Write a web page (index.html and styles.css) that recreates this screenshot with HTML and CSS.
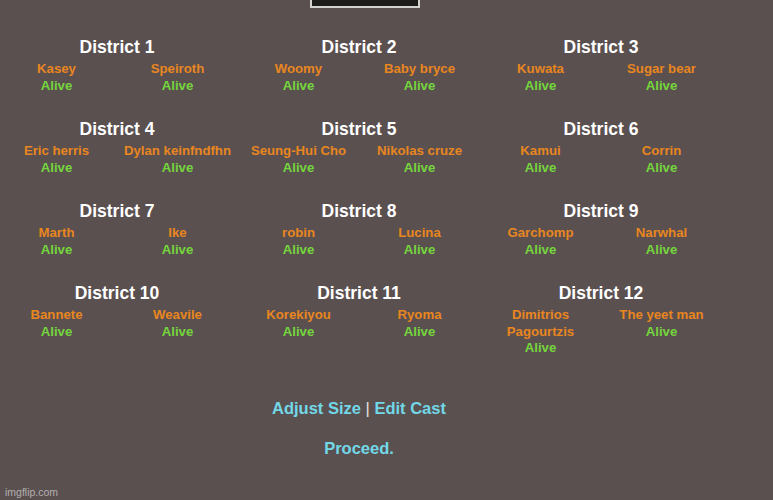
FILE: index.html
```html
<!DOCTYPE html>
<html lang="en">
  <head>
    <meta charset="UTF-8" />
    <meta name="viewport" content="width=device-width, initial-scale=1.0" />
    <title>The Reaping</title>
    <link rel="stylesheet" href="styles.css">
  </head>
  <body>
    <div class="page">
      <div class="banner"></div>

      <div class="districts">
        <div class="district">
          <h2>District 1</h2>
          <div class="tributes">
            <div class="tribute"><span class="name">Kasey</span><span class="status">Alive</span></div>
            <div class="tribute"><span class="name">Speiroth</span><span class="status">Alive</span></div>
          </div>
        </div>
        <div class="district">
          <h2>District 2</h2>
          <div class="tributes">
            <div class="tribute"><span class="name">Woomy</span><span class="status">Alive</span></div>
            <div class="tribute"><span class="name">Baby bryce</span><span class="status">Alive</span></div>
          </div>
        </div>
        <div class="district">
          <h2>District 3</h2>
          <div class="tributes">
            <div class="tribute"><span class="name">Kuwata</span><span class="status">Alive</span></div>
            <div class="tribute"><span class="name">Sugar bear</span><span class="status">Alive</span></div>
          </div>
        </div>

        <div class="district">
          <h2>District 4</h2>
          <div class="tributes">
            <div class="tribute"><span class="name">Eric herris</span><span class="status">Alive</span></div>
            <div class="tribute"><span class="name">Dylan keinfndfhn</span><span class="status">Alive</span></div>
          </div>
        </div>
        <div class="district">
          <h2>District 5</h2>
          <div class="tributes">
            <div class="tribute"><span class="name">Seung-Hui Cho</span><span class="status">Alive</span></div>
            <div class="tribute"><span class="name">Nikolas cruze</span><span class="status">Alive</span></div>
          </div>
        </div>
        <div class="district">
          <h2>District 6</h2>
          <div class="tributes">
            <div class="tribute"><span class="name">Kamui</span><span class="status">Alive</span></div>
            <div class="tribute"><span class="name">Corrin</span><span class="status">Alive</span></div>
          </div>
        </div>

        <div class="district">
          <h2>District 7</h2>
          <div class="tributes">
            <div class="tribute"><span class="name">Marth</span><span class="status">Alive</span></div>
            <div class="tribute"><span class="name">Ike</span><span class="status">Alive</span></div>
          </div>
        </div>
        <div class="district">
          <h2>District 8</h2>
          <div class="tributes">
            <div class="tribute"><span class="name">robin</span><span class="status">Alive</span></div>
            <div class="tribute"><span class="name">Lucina</span><span class="status">Alive</span></div>
          </div>
        </div>
        <div class="district">
          <h2>District 9</h2>
          <div class="tributes">
            <div class="tribute"><span class="name">Garchomp</span><span class="status">Alive</span></div>
            <div class="tribute"><span class="name">Narwhal</span><span class="status">Alive</span></div>
          </div>
        </div>

        <div class="district">
          <h2>District 10</h2>
          <div class="tributes">
            <div class="tribute"><span class="name">Bannete</span><span class="status">Alive</span></div>
            <div class="tribute"><span class="name">Weavile</span><span class="status">Alive</span></div>
          </div>
        </div>
        <div class="district">
          <h2>District 11</h2>
          <div class="tributes">
            <div class="tribute"><span class="name">Korekiyou</span><span class="status">Alive</span></div>
            <div class="tribute"><span class="name">Ryoma</span><span class="status">Alive</span></div>
          </div>
        </div>
        <div class="district">
          <h2>District 12</h2>
          <div class="tributes">
            <div class="tribute"><span class="name">Dimitrios Pagourtzis</span><span class="status">Alive</span></div>
            <div class="tribute"><span class="name">The yeet man</span><span class="status">Alive</span></div>
          </div>
        </div>
      </div>

      <p class="links">
        <a href="#">Adjust Size</a> <span class="sep">|</span> <a href="#">Edit Cast</a>
      </p>
      <p class="links proceed"><a href="#">Proceed.</a></p>
    </div>

    <div class="watermark">imgflip.com</div>
  </body>
</html>
```

FILE: styles.css
```css
body {
  margin: 0;
  background-color: #5b5050;
  font-family: "Liberation Sans", Arial, sans-serif;
  overflow: hidden;
}

.page {
  width: 726px;
  margin-left: -4px;
}

/* bottom edge of the arena picture above the list */
.banner {
  width: 106px;
  height: 6px;
  margin-left: 314px;
  background-color: #1e1c1b;
  border: 2px solid #d6d2d0;
  border-top: none;
}

.districts {
  display: grid;
  grid-template-columns: repeat(3, 242px);
  row-gap: 24px;
  margin-top: 28px;
}

.district h2 {
  margin: 0 0 3px;
  font-size: 17.5px;
  line-height: 22px;
  color: #ffffff;
  text-align: center;
}

.tributes {
  display: grid;
  grid-template-columns: 121px 121px;
}

.tribute {
  display: flex;
  flex-direction: column;
  align-items: center;
  text-align: center;
  font-size: 13.2px;
  font-weight: bold;
  line-height: 16.5px;
}

.name {
  color: #e8861f;
}

.status {
  color: #74d63c;
}

.links {
  margin: 41px 0 0;
  text-align: center;
  font-size: 16.5px;
  line-height: 20px;
  font-weight: bold;
}

.links.proceed {
  margin-top: 20px;
}

.links a {
  color: #72d8e8;
  text-decoration: none;
}

.sep {
  font-weight: normal;
  color: #e6e2e0;
}

.watermark {
  position: absolute;
  left: 5px;
  bottom: 2px;
  font-size: 10.5px;
  color: rgba(255, 255, 255, 0.55);
}
```
